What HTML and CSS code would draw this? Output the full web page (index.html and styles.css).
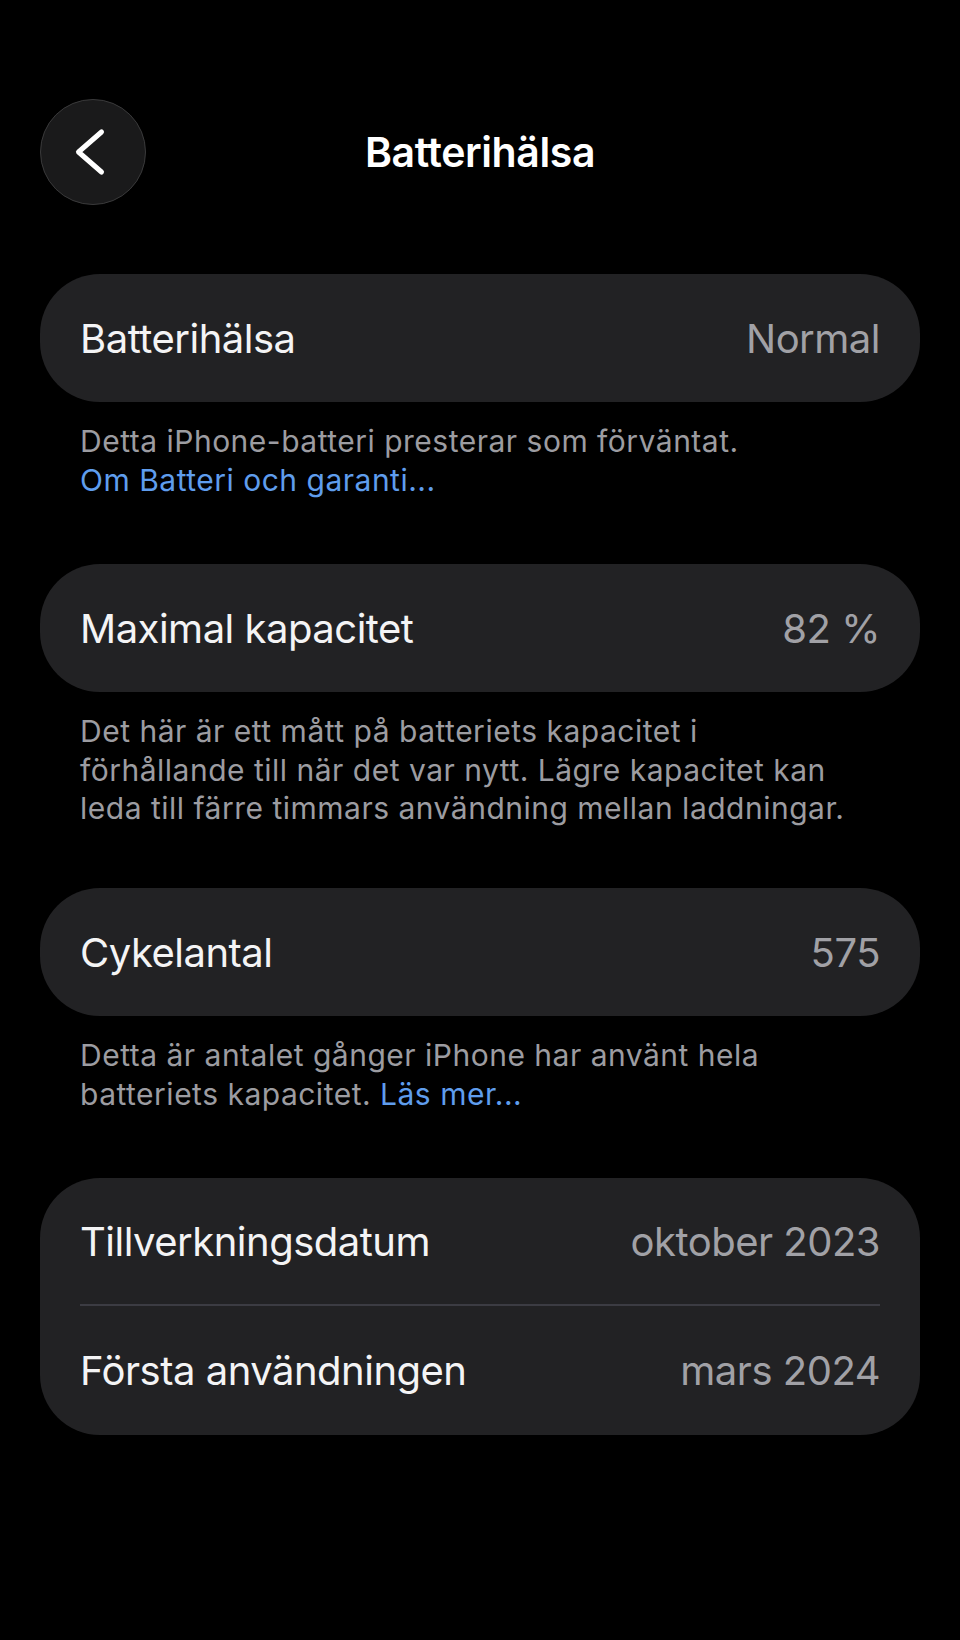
FILE: index.html
```html
<!DOCTYPE html>
<html lang="sv">
<head>
<meta charset="utf-8">
<title>Batterihälsa</title>
<link rel="stylesheet" href="styles.css">
</head>
<body>
<div class="screen">
  <header class="nav">
    <button class="back" aria-label="Tillbaka">
      <svg width="106" height="106" viewBox="0 0 106 106" aria-hidden="true">
        <path d="M61.5 33 L38.5 53 L61.5 73" fill="none" stroke="#fff" stroke-width="5" stroke-linecap="round" stroke-linejoin="round"/>
      </svg>
    </button>
    <h1 class="nav-title">Batterihälsa</h1>
    <span class="nav-spacer"></span>
  </header>

  <main class="content">
    <section class="group">
      <div class="card">
        <div class="row"><span class="label">Batterihälsa</span><span class="value">Normal</span></div>
      </div>
      <p class="footer">Detta iPhone-batteri presterar som förväntat.<br><a class="link" href="#">Om Batteri och garanti...</a></p>
    </section>

    <section class="group">
      <div class="card">
        <div class="row"><span class="label">Maximal kapacitet</span><span class="value">82 %</span></div>
      </div>
      <p class="footer footer-tight">Det här är ett mått på batteriets kapacitet i<br>förhållande till när det var nytt. Lägre kapacitet kan<br>leda till färre timmars användning mellan laddningar.</p>
    </section>

    <section class="group">
      <div class="card">
        <div class="row"><span class="label">Cykelantal</span><span class="value">575</span></div>
      </div>
      <p class="footer">Detta är antalet gånger iPhone har använt hela<br>batteriets kapacitet. <a class="link" href="#">Läs mer...</a></p>
    </section>

    <section class="group">
      <div class="card">
        <div class="row"><span class="label">Tillverkningsdatum</span><span class="value">oktober 2023</span></div>
        <div class="divider"></div>
        <div class="row"><span class="label">Första användningen</span><span class="value">mars 2024</span></div>
      </div>
    </section>
  </main>
</div>
</body>
</html>
```

FILE: styles.css
```css
* { box-sizing: border-box; }

html, body {
  margin: 0;
  padding: 0;
  background: #000;
}

body {
  font-family: Inter, "Noto Sans", "Liberation Sans", sans-serif;
  color: #fff;
  width: 960px;
  height: 1640px;
  overflow: hidden;
}

.screen {
  padding: 99px 40px 0;
}

.nav {
  display: grid;
  grid-template-columns: 106px 1fr 106px;
  align-items: center;
  height: 106px;
}

.back {
  width: 106px;
  height: 106px;
  padding: 0;
  border-radius: 50%;
  background: #1a1a1b;
  border: 1.5px solid #3a3a3b;
  display: flex;
  align-items: center;
  justify-content: center;
  margin: 0;
}

.back svg {
  display: block;
  margin: -1.5px;
}

.nav-title {
  margin: 0;
  text-align: center;
  font-size: 41px;
  font-weight: 600;
  letter-spacing: -0.4px;
  color: #fff;
}

.content {
  margin-top: 69px;
  display: flex;
  flex-direction: column;
  gap: 65px;
}

.card {
  background: #222224;
  border-radius: 60px;
  padding: 0 40px;
}

.row {
  height: 128px;
  display: flex;
  align-items: center;
  justify-content: space-between;
  font-size: 40px;
  letter-spacing: -0.5px;
}

.card .row + .divider + .row {
  height: 129px;
}

.card .row:first-child:not(:last-child) {
  height: 126px;
}

.label {
  color: #f4f4f5;
}

.value {
  color: #a1a1a6;
}

.divider {
  height: 2px;
  background: #3c3c43;
}

.footer {
  margin: 20px 0 0;
  padding: 0 40px;
  font-size: 30px;
  line-height: 38.5px;
  letter-spacing: 0.5px;
  color: #9c9ca1;
}

.footer-tight {
  margin-bottom: -4.5px;
}

.link {
  color: #5f9ded;
  text-decoration: none;
}
```
